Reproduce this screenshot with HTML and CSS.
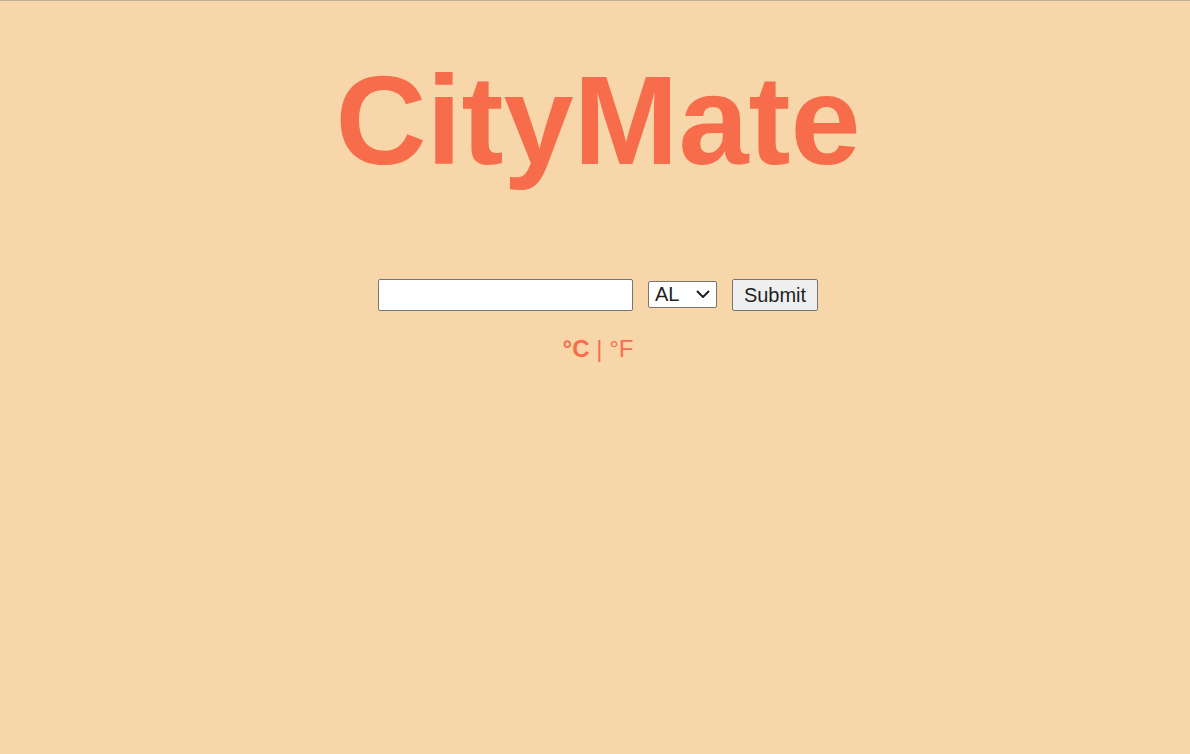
FILE: index.html
```html
<!DOCTYPE html>
<html lang="en">
<head>
<meta charset="utf-8">
<title>CityMate</title>
<link rel="stylesheet" href="styles.css">
</head>
<body>
<main class="page">
  <h1 class="title">CityMate</h1>
  <form class="search" onsubmit="return false;">
    <input class="city-input" type="text" aria-label="City">
    <span class="select-wrap">
      <select class="state-select" aria-label="State">
        <option>AL</option>
        <option>AK</option>
        <option>AZ</option>
      </select>
      <svg class="chevron" width="14" height="8" viewBox="0 0 14 8" aria-hidden="true"><path d="M1 1 L7 7 L13 1" fill="none" stroke="#1f1f1f" stroke-width="2"/></svg>
    </span>
    <button class="submit-btn" type="submit">Submit</button>
  </form>
  <p class="units"><span class="unit active">°C</span> | <span class="unit">°F</span></p>
</main>
</body>
</html>
```

FILE: styles.css
```css
html {
  background: #f7d7aa;
  border-top: 1px solid #c2b093;
}
body {
  margin: 0;
  font-family: "Liberation Sans", Arial, sans-serif;
  color: #f76c4b;
}
.page {
  display: flex;
  flex-direction: column;
  align-items: center;
  padding: 46px 0 0 6px;
}
.title {
  margin: 0;
  font-size: 126px;
  font-weight: 700;
  line-height: 147px;
  color: #f76c4b;
}
.search {
  margin-top: 85px;
  display: flex;
  align-items: center;
  gap: 15px;
}
.city-input {
  box-sizing: border-box;
  width: 255px;
  height: 32px;
  margin: 0;
  border: 1px solid #767676;
  border-radius: 2px;
  background: #fff;
  font: 20px "Liberation Sans", Arial, sans-serif;
  padding: 1px 4px;
}
.select-wrap {
  position: relative;
  display: block;
  height: 27px;
  margin-bottom: 1px;
}
.state-select {
  -webkit-appearance: none;
  appearance: none;
  box-sizing: border-box;
  display: block;
  width: 69px;
  height: 27px;
  margin: 0;
  border: 1px solid #767676;
  border-radius: 2px;
  background: #fff;
  color: #1f1f1f;
  font: 20px "Liberation Sans", Arial, sans-serif;
  line-height: 25px;
  padding: 0 0 0 6px;
}
.chevron {
  position: absolute;
  left: 48px;
  top: 9px;
  pointer-events: none;
}
.submit-btn {
  box-sizing: border-box;
  width: 86px;
  height: 32px;
  margin: 0;
  border: 1px solid #767676;
  border-radius: 2px;
  background: #efefef;
  color: #1f1f1f;
  font: 20px "Liberation Sans", Arial, sans-serif;
  padding: 0 6px;
}
.units {
  margin: 24px 0 0;
  font-size: 24px;
  line-height: 28px;
  color: #f76c4b;
}
.unit.active {
  font-weight: 700;
}
```
